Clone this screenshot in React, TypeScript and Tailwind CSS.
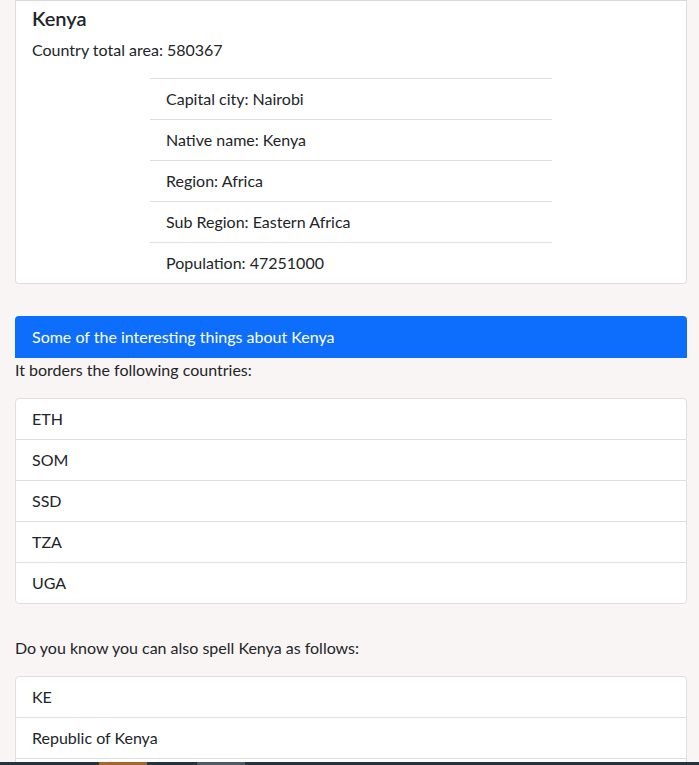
import React from 'react';

const details = [
  'Capital city: Nairobi',
  'Native name: Kenya',
  'Region: Africa',
  'Sub Region: Eastern Africa',
  'Population: 47251000',
];

const borders = ['ETH', 'SOM', 'SSD', 'TZA', 'UGA'];

const spellings = ['KE', 'Republic of Kenya'];

const font = { fontFamily: '"Lato", "Liberation Sans", sans-serif' };

const ListGroup: React.FC<{ items: string[]; more?: boolean }> = ({ items, more }) => (
  <ul className="bg-white border border-[#dfdfdf] rounded-[4px]">
    {items.map((item, i) => (
      <li
        key={item}
        className={`px-4 py-2 leading-6 ${i < items.length - 1 || more ? 'border-b border-[#dfdfdf]' : ''}`}
      >
        {item}
      </li>
    ))}
    {/* rest of the list runs below the fold */}
    {more && <li className="h-10" />}
  </ul>
);

const App: React.FC = () => {
  return (
    <div className="relative h-[765px] overflow-hidden bg-[#f9f5f4] text-[16px] text-[#212529]" style={font}>
      <div className="ml-[15px] w-[672px]">
        {/* country card */}
        <div className="bg-white border border-[#dedede] border-t-[#d5dadd] rounded-b-[4px]">
          <div className="px-4 pt-[5px]">
            <h5 className="text-[20px] font-semibold leading-6 mb-2">Kenya</h5>
            <p className="leading-6 mb-4">Country total area: 580367</p>
          </div>
          <ul className="mx-auto w-[402px] border-t border-[#dfdfdf]">
            {details.map((d, i) => (
              <li
                key={d}
                className={`px-4 py-2 leading-6 ${i < details.length - 1 ? 'border-b border-[#dfdfdf]' : ''}`}
              >
                {d}
              </li>
            ))}
          </ul>
        </div>

        <div className="mt-8 rounded-t-[4px] bg-[#0d6efd] text-white px-[17px] py-[9px] leading-6">
          Some of the interesting things about Kenya
        </div>
        <p className="leading-6 mb-4">It borders the following countries:</p>
        <ListGroup items={borders} />

        <p className="leading-6 mt-8 mb-4">Do you know you can also spell Kenya as follows:</p>
        <ListGroup items={spellings} more />
      </div>

      {/* taskbar peeking in at the bottom */}
      <div className="fixed bottom-0 left-0 right-0 h-[3px] flex bg-[#21343f]">
        <div className="w-[99px]" />
        <div className="w-[48px] bg-[#a5652f]" />
        <div className="w-[50px]" />
        <div className="w-[48px] bg-[#4c5a62]" />
      </div>
    </div>
  );
};

export default App;
